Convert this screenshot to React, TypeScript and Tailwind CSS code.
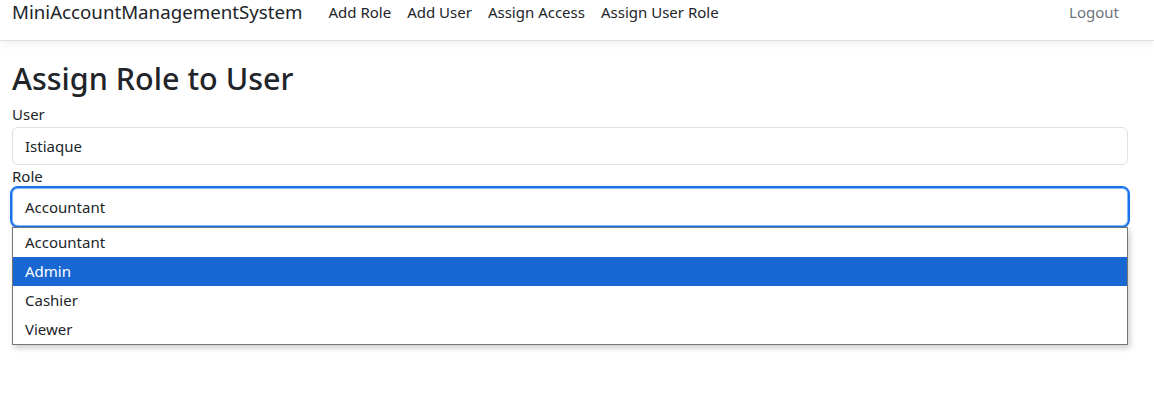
import React from 'react';

const roles = ['Accountant', 'Admin', 'Cashier', 'Viewer'];

export default function App() {
    return (
        <div className="min-h-[407px] bg-white text-[#212529]" style={{ fontFamily: '"Segoe UI", "Noto Sans", Roboto, sans-serif' }}>
            {/* Navbar */}
            <nav className="h-[41px] border-b border-[#dfdfdf] shadow-[0_4px_8px_rgba(0,0,0,0.05)] flex items-start pl-3 pr-[35px]">
                <a className="text-[18.7px] leading-[24px] mr-[18px]">MiniAccountManagementSystem</a>
                <ul className="flex text-[15px] leading-[24px]">
                    <li className="px-2">Add Role</li>
                    <li className="px-2">Add User</li>
                    <li className="px-2">Assign Access</li>
                    <li className="px-2">Assign User Role</li>
                </ul>
                <div className="ml-auto text-[15px] leading-[24px] text-[#6c757d]">Logout</div>
            </nav>

            {/* Content */}
            <main className="px-3 pt-[18px]">
                <h1 className="text-[30.5px] font-medium leading-[38px] mb-[8px]">Assign Role to User</h1>
                <label className="block text-[15px] leading-[18px]">User</label>
                <div className="mt-[4px] w-[1116px] h-[38px] border border-[#dee2e6] rounded-[6px] flex items-center px-3 text-[15px]">
                    Istiaque
                </div>
                <label className="block text-[15px] leading-[18px] mt-[2px]">Role</label>
                <div className="relative mt-[3px] w-[1116px]">
                    <div className="h-[38px] border border-[#86b7fe] outline-2 outline-[#1a73e8] rounded-[6px] flex items-center px-3 text-[15px] shadow-[0_4px_6px_rgba(0,0,0,0.08)]">
                        Accountant
                    </div>
                    <ul className="absolute left-0 right-0 top-[39px] border border-[#767676] bg-white shadow-[2px_3px_6px_rgba(0,0,0,0.2)] text-[15px]">
                        {roles.map((r) => (
                            <li
                                key={r}
                                className={`h-[29px] flex items-center px-3 ${r === 'Admin' ? 'bg-[#1967d2] text-white' : ''}`}
                            >
                                {r}
                            </li>
                        ))}
                    </ul>
                </div>
            </main>
        </div>
    );
}
